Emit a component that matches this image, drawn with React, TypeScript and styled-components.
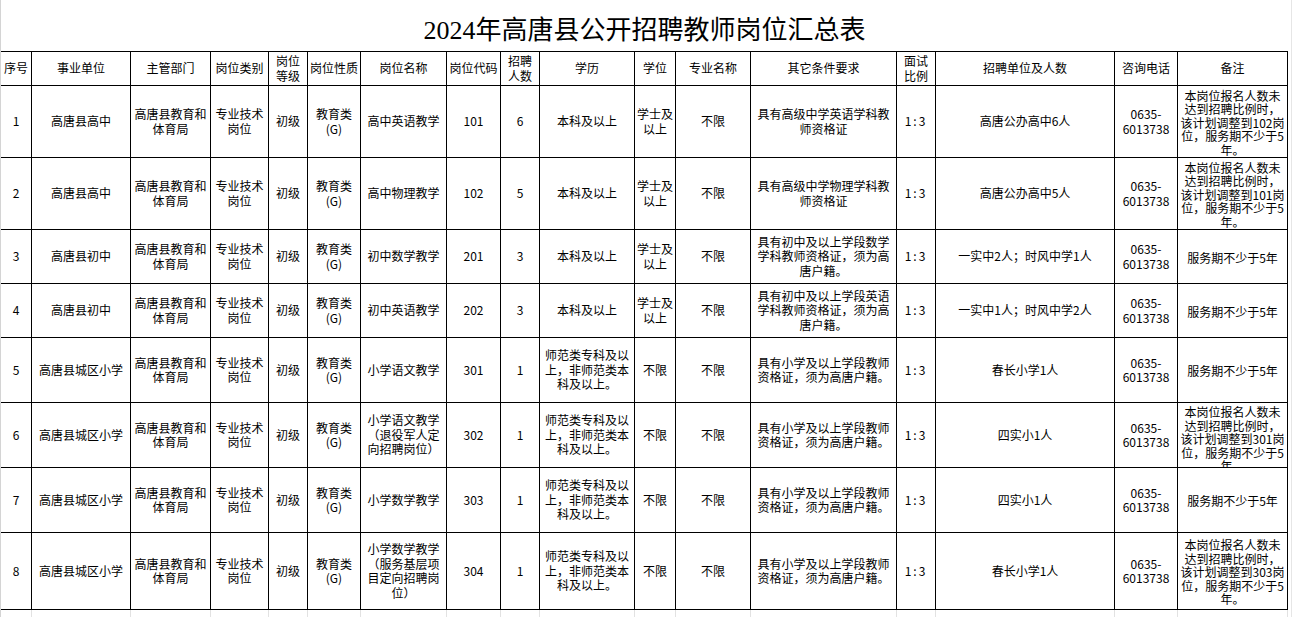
import React from 'react';
import styled, { createGlobalStyle } from 'styled-components';

const GlobalStyle = createGlobalStyle`
  html, body {
    margin: 0;
    padding: 0;
    background: #ffffff;
  }
  body {
    font-family: "Noto Sans CJK SC", "Liberation Sans", sans-serif;
    color: #000;
  }
`;

const COLUMNS = [30, 98, 79, 57, 38, 52, 85, 53, 38, 94, 40, 74, 145, 38, 178, 62, 109];
const ROW_HEIGHTS = [33, 71, 71, 53, 53, 64, 64, 64, 76];
const REMARK_COL = 16;
const RATIO_COL = 13;

const Sheet = styled.div`
  width: 1292px;
  height: 617px;
  overflow: hidden;
  box-sizing: border-box;
  border-left: 1px solid #d4d4d4;
  border-right: 1px solid #e6e6e6;
`;

const Title = styled.h1`
  margin: 0;
  width: 1287px;
  height: 51px;
  display: flex;
  align-items: center;
  justify-content: center;
  padding-top: 3px;
  box-sizing: border-box;
  font-family: "Liberation Serif", "Noto Sans CJK SC", serif;
  font-size: 26px;
  font-weight: 400;
`;

const Grid = styled.div<{ $rows: number[]; $line: string }>`
  display: grid;
  grid-template-columns: ${COLUMNS.map((w) => `${w}px`).join(' ')};
  grid-template-rows: ${(p) => p.$rows.map((h) => `${h}px`).join(' ')};
  gap: 1px;
  width: fit-content;
  background: ${(p) => p.$line};
  padding: ${(p) => (p.$line === '#000' ? '1px 1px 1px 0' : '0 1px 0 0')};
`;

// remark cells hold more lines than fit: they start at the top when they overflow
const Cell = styled.div<{ $clip?: boolean; $spaced?: boolean }>`
  background: #fff;
  display: flex;
  flex-direction: column;
  justify-content: ${(p) => (p.$clip ? 'safe center' : 'center')};
  align-items: stretch;
  text-align: center;
  overflow: hidden;
  padding: ${(p) => (p.$clip ? '2px 0 0' : '0 1px')};
  box-sizing: border-box;
  font-size: 12px;
  line-height: ${(p) => (p.$clip ? '13.5px' : '14.5px')};
  letter-spacing: ${(p) => (p.$spaced ? '2px' : '0')};
  white-space: pre-line;
`;

const Text = styled.span`
  display: block;
  width: 100%;
`;

const BlankCell = styled.div`
  background: #fff;
`;

const HEADER = [
  '序号',
  '事业单位',
  '主管部门',
  '岗位类别',
  '岗位\n等级',
  '岗位性质',
  '岗位名称',
  '岗位代码',
  '招聘\n人数',
  '学历',
  '学位',
  '专业名称',
  '其它条件要求',
  '面试\n比例',
  '招聘单位及人数',
  '咨询电话',
  '备注',
];

const DEPT = '高唐县教育和\n体育局';
const KIND = '专业技术\n岗位';
const NATURE = '教育类\n(G)';
const PHONE = '0635-\n6013738';
const NORMAL = '师范类专科及以\n上，非师范类本\n科及以上。';
const PRIMARY_REQ = '具有小学及以上学段教师\n资格证，须为高唐户籍。';
const SERVE = '服务期不少于5年';
const remark = (code: string) =>
  `本岗位报名人数未\n达到招聘比例时，\n该计划调整到${code}岗\n位，服务期不少于5\n年。`;

const ROWS: string[][] = [
  ['1', '高唐县高中', DEPT, KIND, '初级', NATURE, '高中英语教学', '101', '6', '本科及以上', '学士及\n以上', '不限', '具有高级中学英语学科教\n师资格证', '1:3', '高唐公办高中6人', PHONE, remark('102')],
  ['2', '高唐县高中', DEPT, KIND, '初级', NATURE, '高中物理教学', '102', '5', '本科及以上', '学士及\n以上', '不限', '具有高级中学物理学科教\n师资格证', '1:3', '高唐公办高中5人', PHONE, remark('101')],
  ['3', '高唐县初中', DEPT, KIND, '初级', NATURE, '初中数学教学', '201', '3', '本科及以上', '学士及\n以上', '不限', '具有初中及以上学段数学\n学科教师资格证，须为高\n唐户籍。', '1:3', '一实中2人；时风中学1人', PHONE, SERVE],
  ['4', '高唐县初中', DEPT, KIND, '初级', NATURE, '初中英语教学', '202', '3', '本科及以上', '学士及\n以上', '不限', '具有初中及以上学段英语\n学科教师资格证，须为高\n唐户籍。', '1:3', '一实中1人；时风中学2人', PHONE, SERVE],
  ['5', '高唐县城区小学', DEPT, KIND, '初级', NATURE, '小学语文教学', '301', '1', NORMAL, '不限', '不限', PRIMARY_REQ, '1:3', '春长小学1人', PHONE, SERVE],
  ['6', '高唐县城区小学', DEPT, KIND, '初级', NATURE, '小学语文教学\n（退役军人定\n向招聘岗位）', '302', '1', NORMAL, '不限', '不限', PRIMARY_REQ, '1:3', '四实小1人', PHONE, remark('301')],
  ['7', '高唐县城区小学', DEPT, KIND, '初级', NATURE, '小学数学教学', '303', '1', NORMAL, '不限', '不限', PRIMARY_REQ, '1:3', '四实小1人', PHONE, SERVE],
  ['8', '高唐县城区小学', DEPT, KIND, '初级', NATURE, '小学数学教学\n（服务基层项\n目定向招聘岗\n位）', '304', '1', NORMAL, '不限', '不限', PRIMARY_REQ, '1:3', '春长小学1人', PHONE, remark('303')],
];

const App: React.FC = () => {
  return (
    <>
      <GlobalStyle />
      <Sheet>
        <Title>2024年高唐县公开招聘教师岗位汇总表</Title>
        <Grid $rows={ROW_HEIGHTS} $line="#000">
          {HEADER.map((h, i) => (
            <Cell key={`h${i}`}>
              <Text>{h}</Text>
            </Cell>
          ))}
          {ROWS.map((row, r) =>
            row.map((value, c) => (
              <Cell key={`${r}-${c}`} $clip={c === REMARK_COL} $spaced={c === RATIO_COL}>
                <Text>{value}</Text>
              </Cell>
            ))
          )}
        </Grid>
        <Grid $rows={[20]} $line="#e2e2e2">
          {COLUMNS.map((_, i) => (
            <BlankCell key={`t${i}`} />
          ))}
        </Grid>
      </Sheet>
    </>
  );
};

export default App;
